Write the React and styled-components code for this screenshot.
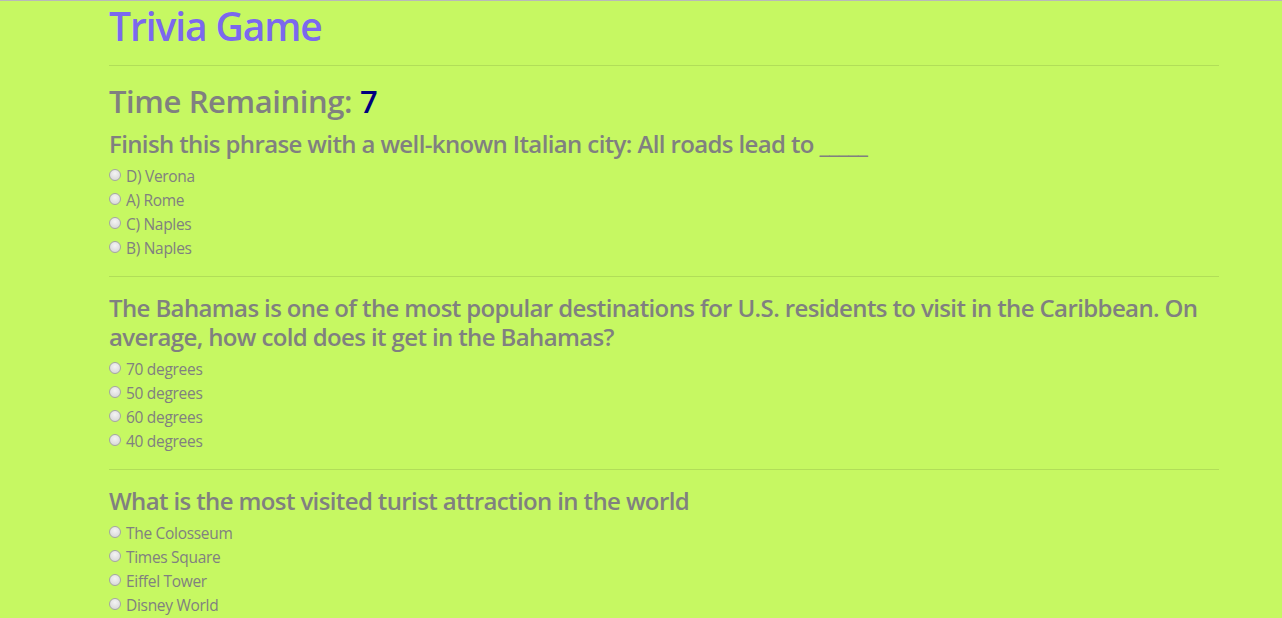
import React from "react";
import styled, { createGlobalStyle } from "styled-components";

const GlobalStyle = createGlobalStyle`
  html, body {
    margin: 0;
    padding: 0;
  }
  body {
    background: #c6f862;
    border-top: 1px solid #b9b9b9;
    font-family: "Open Sans", "Noto Sans", sans-serif;
    color: #808080;
  }
`;

const questions = [
  {
    text: "Finish this phrase with a well-known Italian city: All roads lead to _____",
    answers: ["D) Verona", "A) Rome", "C) Naples", "B) Naples"],
  },
  {
    text: "The Bahamas is one of the most popular destinations for U.S. residents to visit in the Caribbean. On average, how cold does it get in the Bahamas?",
    answers: ["70 degrees", "50 degrees", "60 degrees", "40 degrees"],
  },
  {
    text: "What is the most visited turist attraction in the world",
    answers: ["The Colosseum", "Times Square", "Eiffel Tower", "Disney World"],
  },
];

export default function App() {
  return (
    <>
      <GlobalStyle />
      <Container>
        <Title>Trivia Game</Title>
        <Rule />
        <Timer>
          Time Remaining: <Count>7</Count>
        </Timer>
        {questions.map((q, i) => (
          <Question key={i}>
            {i > 0 && <Rule />}
            <QuestionText>{q.text}</QuestionText>
            {q.answers.map((a) => (
              <Answer key={a}>
                <Radio type="radio" name={"q" + i} value={a} />
                {a}
              </Answer>
            ))}
          </Question>
        ))}
      </Container>
    </>
  );
}

const Container = styled.div`
  width: 1110px;
  margin-left: 109px;
`;

const Title = styled.h1`
  margin: 0 0 8px;
  padding-top: 1px;
  height: 47px;
  font-size: 39px;
  line-height: 47px;
  font-weight: 600;
  color: #7b68ee;
  letter-spacing: -1.1px;
`;

const Rule = styled.hr`
  margin: 16px 0;
  border: 0;
  border-top: 1px solid rgba(0, 0, 0, 0.1);
`;

const Timer = styled.h2`
  margin: 0 0 8px;
  font-size: 31px;
  line-height: 39px;
  font-weight: 600;
  letter-spacing: -0.4px;
`;

const Count = styled.span`
  color: #000080;
`;

const Question = styled.div``;

const QuestionText = styled.h4`
  margin: 0 0 6px;
  font-size: 24px;
  line-height: 29px;
  font-weight: 600;
  letter-spacing: -0.62px;
`;

const Answer = styled.label`
  display: flex;
  align-items: center;
  height: 24px;
  font-size: 15.5px;
  letter-spacing: -0.3px;
`;

const Radio = styled.input`
  appearance: none;
  width: 12px;
  height: 12px;
  margin: -3px 5px 0 0;
  border-radius: 50%;
  border: 1px solid #a5a5a5;
  background: radial-gradient(circle at 50% 35%, #f4f4f4, #d2d2d2);
  box-sizing: border-box;
`;
